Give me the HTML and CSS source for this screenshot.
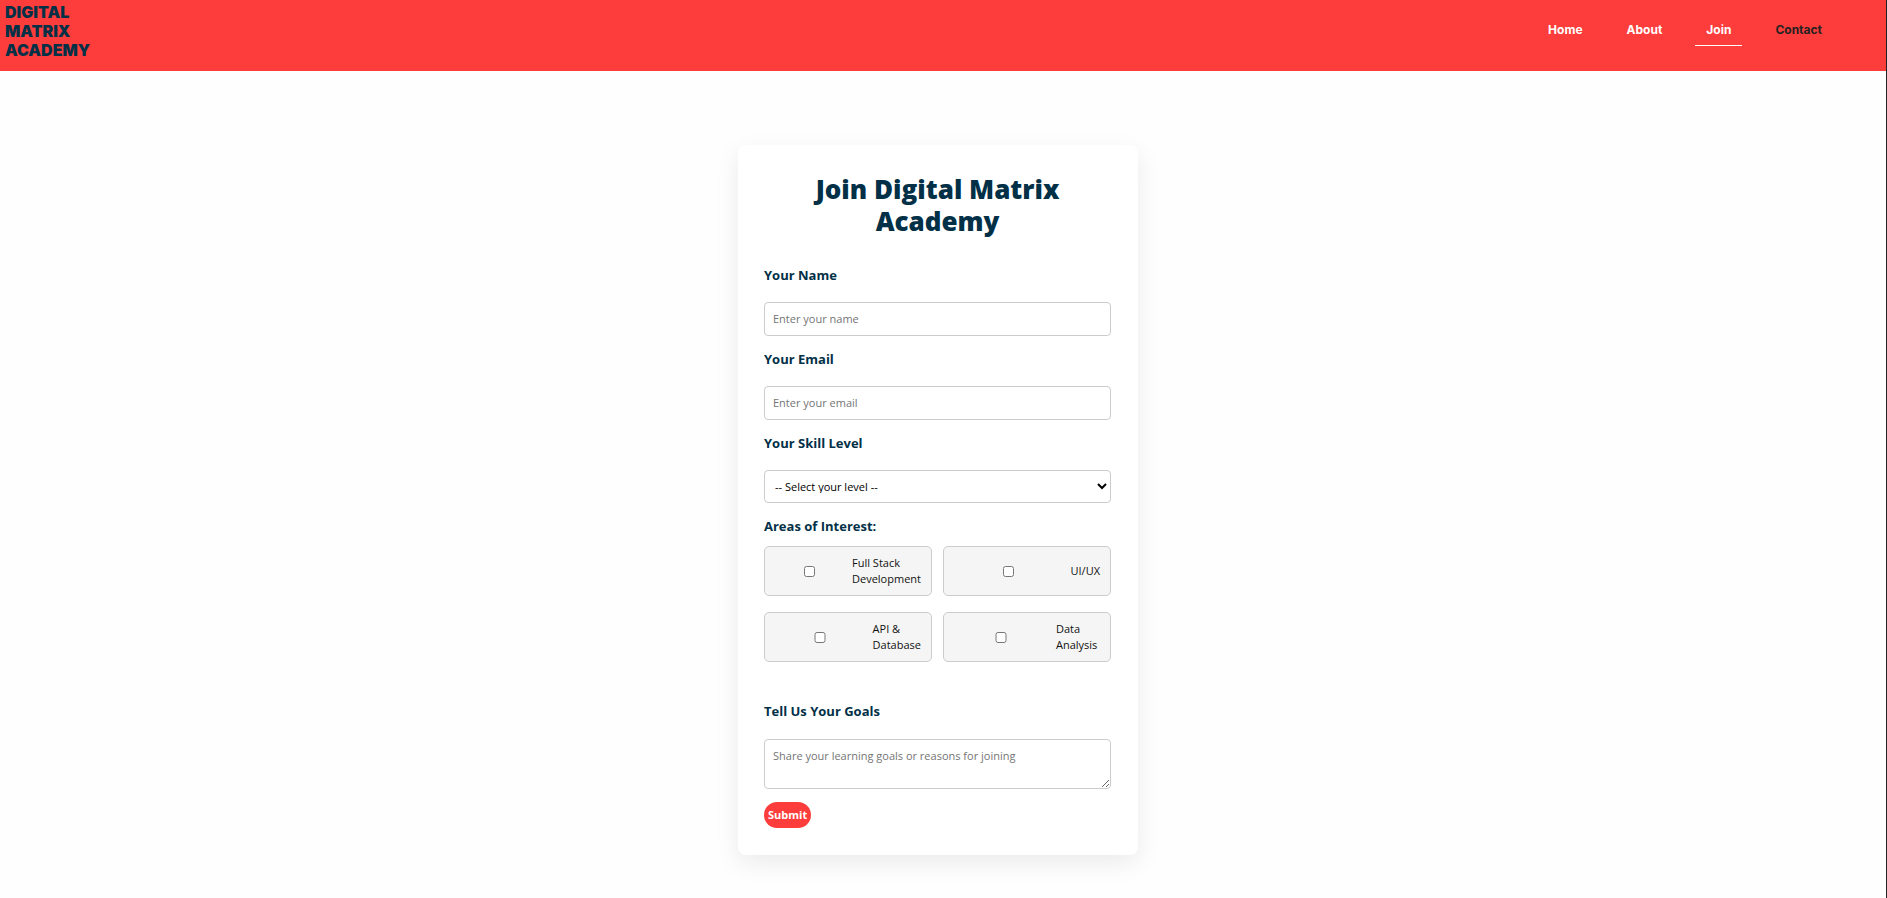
FILE: index.html
```html
<!DOCTYPE html>
<html lang="en">
<head>
<meta charset="utf-8">
<meta name="viewport" content="width=device-width, initial-scale=1">
<title>Join - Digital Matrix Academy</title>
<link rel="stylesheet" href="styles.css">
</head>
<body>
<header class="site-header">
  <a class="logo" href="#">DIGITAL<br>MATRIX<br>ACADEMY</a>
  <nav class="nav">
    <a class="nav-link" href="#">Home</a>
    <a class="nav-link" href="#">About</a>
    <a class="nav-link nav-active" href="#">Join</a>
    <a class="nav-link nav-dark" href="#">Contact</a>
  </nav>
</header>
<main class="page">
  <form class="card">
    <h1 class="title">Join Digital Matrix Academy</h1>
    <label class="label" for="name">Your Name</label>
    <input class="field" id="name" type="text" placeholder="Enter your name">
    <label class="label" for="email">Your Email</label>
    <input class="field" id="email" type="email" placeholder="Enter your email">
    <label class="label" for="level">Your Skill Level</label>
    <select class="field select" id="level">
      <option>-- Select your level --</option>
      <option>Beginner</option>
      <option>Intermediate</option>
      <option>Advanced</option>
    </select>
    <fieldset class="interests">
      <legend class="label legend">Areas of Interest:</legend>
      <div class="tiles">
        <label class="tile"><input class="check" type="checkbox"><span>Full Stack Development</span></label>
        <label class="tile"><input class="check" type="checkbox"><span>UI/UX</span></label>
        <label class="tile"><input class="check" type="checkbox"><span>API &amp; Database</span></label>
        <label class="tile"><input class="check" type="checkbox"><span>Data Analysis</span></label>
      </div>
    </fieldset>
    <label class="label" for="goals">Tell Us Your Goals</label>
    <textarea class="field goals" id="goals" placeholder="Share your learning goals or reasons for joining"></textarea>
    <button class="submit" type="submit">Submit</button>
  </form>
</main>
</body>
</html>
```
FILE: styles.css
```css
* {
  box-sizing: border-box;
}

body {
  margin: 0;
  min-height: 100vh;
  border-right: 1px solid #222;
  background: #fefefe;
  color: #111;
  font-family: "Open Sans", "Noto Sans", sans-serif;
  font-size: 11px;
  line-height: 16px;
}

.site-header {
  display: flex;
  justify-content: space-between;
  align-items: flex-start;
  padding: 3px 53px 11px 5px;
  background: #fc3d3b;
  font-family: Inter, sans-serif;
}

.logo {
  color: #023047;
  font-size: 16px;
  font-weight: 900;
  line-height: 19px;
  text-decoration: none;
}

.nav {
  display: flex;
  align-items: center;
  gap: 22px;
  padding-top: 11px;
}

.nav-link {
  padding: 8px 11px;
  color: #fff;
  font-size: 12px;
  font-weight: 700;
  line-height: 16px;
  text-decoration: none;
}

.nav-active {
  padding-bottom: 7px;
  border-bottom: 1px solid #fff;
}

.nav-dark {
  color: #222;
}

.page {
  display: flex;
  justify-content: center;
  padding: 74px 10px 43px 0;
}

.card {
  display: flex;
  flex-direction: column;
  width: 400px;
  padding: 28px 27px 27px 26px;
  border-radius: 8px;
  background: #fff;
  box-shadow: 0 8px 24px rgba(0, 0, 0, 0.08);
}

.title {
  margin: 0 0 15px;
  color: #023047;
  font-size: 26px;
  font-weight: 800;
  line-height: 32px;
  text-align: center;
}

.label {
  padding: 15px 0 19px;
  color: #023047;
  font-size: 13px;
  font-weight: 700;
  line-height: 16px;
}

.field {
  width: 100%;
  height: 34px;
  padding: 7px 8px 9px;
  border: 1px solid #ccc;
  border-radius: 4px;
  background: #fff;
  color: #000;
  font: inherit;
}

.field::placeholder {
  color: #757575;
}

.select {
  height: 33px;
  padding: 7px 6px 9px;
}

.interests {
  min-width: 0;
  margin: 0 0 26px;
  padding: 0;
  border: 0;
}

.legend {
  padding-bottom: 12px;
}

.tiles {
  display: grid;
  grid-template-columns: 1fr 1fr;
  gap: 16px 11px;
}

.tile {
  display: flex;
  align-items: center;
  gap: 8px;
  min-height: 50px;
  padding: 8px 10px;
  border: 1px solid #ccc;
  border-radius: 5px;
  background: #f5f5f5;
}

.check {
  width: 100%;
  height: 11px;
  margin: 0;
}

.goals {
  height: 50px;
  margin-top: 1px;
  padding-top: 8px;
  resize: vertical;
}

.submit {
  align-self: flex-start;
  height: 26px;
  margin-top: 13px;
  padding: 0 4px;
  border: 0;
  border-radius: 13px;
  background: #fc3d3b;
  color: #fff;
  font: inherit;
  font-weight: 700;
}
```
